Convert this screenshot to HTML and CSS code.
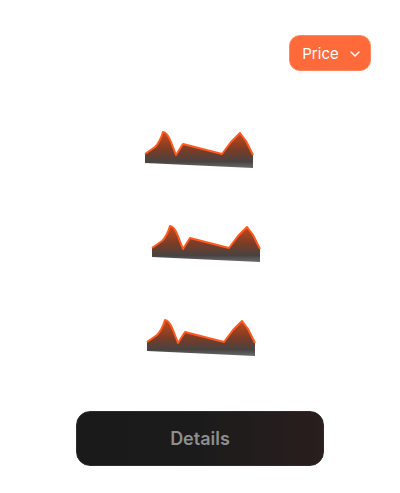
FILE: index.html
```html
<!DOCTYPE html>
<html>
<head>
<meta charset="utf-8">
<link rel="stylesheet" href="styles.css">
</head>
<body>
<div class="page">
  <button class="price-btn">Price
    <svg class="chev" width="10" height="6" viewBox="0 0 10 6"><path d="M1 1l4 4 4-4" fill="none" stroke="#fff" stroke-width="1.4" stroke-linecap="round" stroke-linejoin="round"/></svg>
  </button>
  <div class="charts">
    <svg class="spark spark-a" width="120" height="45" viewBox="0 0 120 45">
      <defs>
        <linearGradient id="g" x1="0" y1="0" x2="0" y2="1">
          <stop offset="0" stop-color="#c8481a"/>
          <stop offset="0.5" stop-color="#7a3c26"/>
          <stop offset="0.82" stop-color="#484342"/>
          <stop offset="1" stop-color="#6a6a6a"/>
        </linearGradient>
      </defs>
      <path d="M2 26 L12 19 Q17 14 20 4 Q24 4 28 14 L33 27 L40 16 L79 26 L88 14 L97 5 L103 13 L110 27 L110 40 L2 35 Z" fill="url(#g)"/>
      <path d="M2 26 L12 19 Q17 14 20 4 Q24 4 28 14 L33 27 L40 16 L79 26 L88 14 L97 5 L103 13 L110 27" fill="none" stroke="#ff5a1f" stroke-width="2" stroke-linejoin="round"/>
    </svg>
    <svg class="spark spark-b" width="120" height="45" viewBox="0 0 120 45">
      <path d="M2 26 L12 19 Q17 14 20 4 Q24 4 28 14 L33 27 L40 16 L79 26 L88 14 L97 5 L103 13 L110 27 L110 40 L2 35 Z" fill="url(#g)"/>
      <path d="M2 26 L12 19 Q17 14 20 4 Q24 4 28 14 L33 27 L40 16 L79 26 L88 14 L97 5 L103 13 L110 27" fill="none" stroke="#ff5a1f" stroke-width="2" stroke-linejoin="round"/>
    </svg>
    <svg class="spark spark-c" width="120" height="45" viewBox="0 0 120 45">
      <path d="M2 26 L12 19 Q17 14 20 4 Q24 4 28 14 L33 27 L40 16 L79 26 L88 14 L97 5 L103 13 L110 27 L110 40 L2 35 Z" fill="url(#g)"/>
      <path d="M2 26 L12 19 Q17 14 20 4 Q24 4 28 14 L33 27 L40 16 L79 26 L88 14 L97 5 L103 13 L110 27" fill="none" stroke="#ff5a1f" stroke-width="2" stroke-linejoin="round"/>
    </svg>
  </div>
  <button class="details-btn">Details</button>
</div>
</body>
</html>
```

FILE: styles.css
```css
html, body {
  margin: 0;
  padding: 0;
  background: #ffffff;
}
.page {
  width: 400px;
  height: 493px;
  display: flex;
  flex-direction: column;
  font-family: Inter, "Liberation Sans", sans-serif;
}
.price-btn {
  align-self: flex-end;
  margin: 35px 29px 0 0;
  width: 82px;
  height: 36px;
  box-sizing: border-box;
  border: 1px solid #ff875f;
  border-radius: 11px;
  background: #ff6a3a;
  color: #ffffff;
  font-family: Inter, "Liberation Sans", sans-serif;
  font-size: 15px;
  display: flex;
  align-items: center;
  justify-content: center;
  gap: 11px;
  padding: 0 0 0 2px;
}
.chev {
  display: block;
  margin-top: 1px;
}
.charts {
  display: flex;
  flex-direction: column;
  align-items: flex-start;
  gap: 49px;
  margin-top: 57px;
}
.spark {
  display: block;
}
.spark-a { margin-left: 143px; }
.spark-b { margin-left: 150px; }
.spark-c { margin-left: 145px; }
.details-btn {
  margin: 50px 0 0 76px;
  width: 248px;
  height: 55px;
  box-sizing: border-box;
  border: 1px solid #2c2c2c;
  border-radius: 14px;
  background: linear-gradient(90deg, #1a1a1a 0%, #1c1b1b 50%, #2a1e1e 100%);
  color: #8e8e8e;
  font-family: Inter, "Liberation Sans", sans-serif;
  font-size: 18px;
  font-weight: 600;
}
```
